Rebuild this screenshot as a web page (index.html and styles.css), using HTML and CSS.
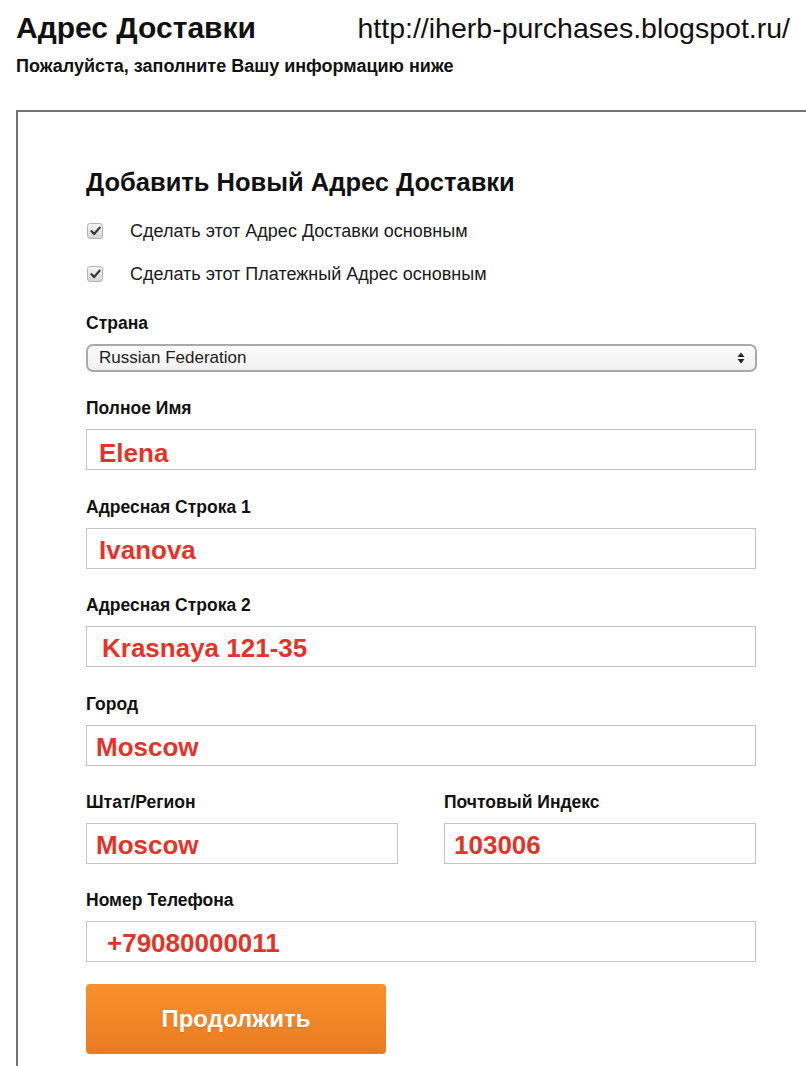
FILE: index.html
```html
<!DOCTYPE html>
<html>
<head>
<meta http-equiv="Content-Type" content="text/html; charset=utf-8"/>
<title>Адрес Доставки</title>
<link rel="stylesheet" href="styles.css">
</head>
<body>

<div class="top">
  <h1>Адрес Доставки</h1>
  <span class="site-url">http://iherb-purchases.blogspot.ru/</span>
</div>
<p class="intro">Пожалуйста, заполните Вашу информацию ниже</p>

<div class="panel">
  <h2>Добавить Новый Адрес Доставки</h2>

  <div class="check-row">
    <span class="checkbox"><svg width="11" height="10" viewBox="0 0 11 10"><path d="M1.5 5.2 L4.2 8 L9.6 1.6" fill="none" stroke="#333" stroke-width="2.2" stroke-linecap="round" stroke-linejoin="round"/></svg></span>
    <span>Сделать этот Адрес Доставки основным</span>
  </div>
  <div class="check-row">
    <span class="checkbox"><svg width="11" height="10" viewBox="0 0 11 10"><path d="M1.5 5.2 L4.2 8 L9.6 1.6" fill="none" stroke="#333" stroke-width="2.2" stroke-linecap="round" stroke-linejoin="round"/></svg></span>
    <span>Сделать этот Платежный Адрес основным</span>
  </div>

  <div class="field first">
    <div class="label">Страна</div>
    <div class="select">
      <span>Russian Federation</span>
      <svg width="8" height="12" viewBox="0 0 8 12"><path d="M4 0.5 L7.5 5 L0.5 5 Z M0.5 7 L7.5 7 L4 11.5 Z" fill="#222"/></svg>
    </div>
  </div>

  <div class="field">
    <div class="label">Полное Имя</div>
    <div class="input name">Elena</div>
  </div>

  <div class="field">
    <div class="label">Адресная Строка 1</div>
    <div class="input">Ivanova</div>
  </div>

  <div class="field">
    <div class="label">Адресная Строка 2</div>
    <div class="input indent-wide">Krasnaya 121-35</div>
  </div>

  <div class="field">
    <div class="label">Город</div>
    <div class="input indent-narrow">Moscow</div>
  </div>

  <div class="field-pair">
    <div class="field">
      <div class="label">Штат/Регион</div>
      <div class="input indent-narrow">Moscow</div>
    </div>
    <div class="field">
      <div class="label">Почтовый Индекс</div>
      <div class="input indent-narrow">103006</div>
    </div>
  </div>

  <div class="field">
    <div class="label">Номер Телефона</div>
    <div class="input indent-phone">+79080000011</div>
  </div>

  <div class="button">Продолжить</div>
</div>

</body>
</html>
```

FILE: styles.css
```css
body {
   margin: 0;
   font-family: "Liberation Sans", Arial, "DejaVu Sans", sans-serif;
   background-color: white;
   color: #111;
   overflow-x: hidden;
}

.top {
   display: flex;
   align-items: baseline;
   padding: 11px 16px 0 16px;
}

h1 {
   margin: 0;
   font-size: 30px;
   line-height: 33px;
   font-weight: bold;
}

.site-url {
   margin-left: auto;
   font-size: 28.5px;
   line-height: 33px;
}

.intro {
   margin: 11px 0 0 16px;
   font-size: 18px;
   line-height: 20px;
   font-weight: bold;
}

.panel {
   margin: 34px -40px 0 16px;
   padding: 55px 0 12px 68px;
   border: 2px solid #737373;
   border-right: none;
   border-bottom: none;
}

h2 {
   margin: 0;
   font-size: 25.5px;
   line-height: 30px;
   font-weight: bold;
}

.check-row {
   display: flex;
   align-items: center;
   height: 24px;
   margin-top: 19px;
   font-size: 18px;
   color: #1a1a1a;
}

.panel h2 + .check-row {
   margin-top: 22px;
}

.checkbox {
   display: flex;
   align-items: center;
   justify-content: center;
   width: 14px;
   height: 14px;
   margin: 0 27px 0 1px;
   border: 1px solid #b4b4b4;
   border-radius: 3px;
   background: linear-gradient(#f4f4f4, #d6d6d6);
}

.field {
   margin-top: 26.4px;
}

.field.first {
   margin-top: 27px;
}

.label {
   font-size: 17.5px;
   line-height: 20px;
   font-weight: bold;
   margin-bottom: 11px;
}

.select {
   display: flex;
   align-items: center;
   justify-content: space-between;
   box-sizing: border-box;
   width: 671px;
   height: 28px;
   padding: 0 10px 0 11px;
   border: 2px solid #a9a9a9;
   border-radius: 7px;
   background: linear-gradient(#fbfbfb, #f1f1f1);
   font-size: 17px;
   color: #222;
}

.input {
   box-sizing: border-box;
   width: 670px;
   height: 41px;
   padding: 8px 0 0 12px;
   border: 1px solid #c4c4c4;
   font-size: 26px;
   line-height: 26px;
   font-weight: bold;
   color: #e3342a;
}

.input.name {
   padding-top: 10px;
}

.input.indent-narrow {
   padding-left: 9px;
}

.input.indent-wide {
   padding-left: 15px;
}

.input.indent-phone {
   padding-left: 20px;
}

.field-pair {
   display: grid;
   grid-template-columns: 312px 312px;
   column-gap: 46px;
   width: 670px;
}

.field-pair .input {
   width: 100%;
}

.button {
   display: flex;
   align-items: center;
   justify-content: center;
   width: 300px;
   height: 70px;
   margin-top: 22px;
   border-radius: 4px;
   background: linear-gradient(#f8912b, #ea7b21);
   color: white;
   font-size: 24px;
   font-weight: bold;
   text-shadow: 0 1px 1px rgba(150, 70, 0, 0.25);
}
```
